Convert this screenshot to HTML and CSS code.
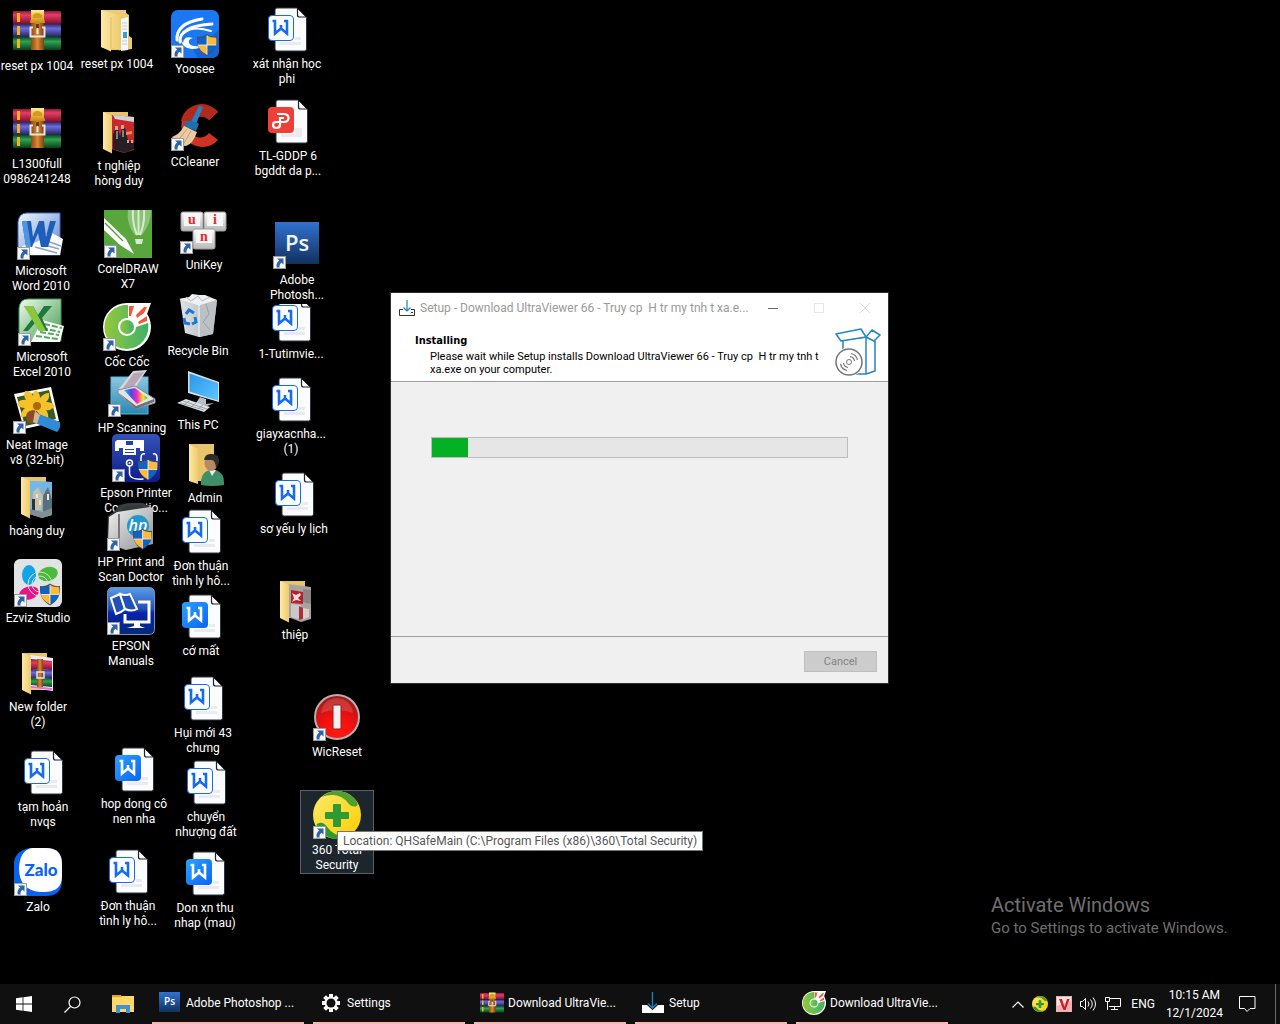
FILE: index.html
```html
<!DOCTYPE html>
<html lang="vi">
<head>
    <meta charset="UTF-8">
    <meta name="viewport" content="width=device-width, initial-scale=1.0">
    <title>Desktop</title>
    <link rel="stylesheet" href="styles.css">
</head>
<body>
    <!-- shared icon shapes -->
    <svg class="sprites" aria-hidden="true">
        <defs>
            <linearGradient id="gRed" x1="0" y1="0" x2="0" y2="1"><stop offset="0" stop-color="#8d1835"/><stop offset=".3" stop-color="#e63d67"/><stop offset="1" stop-color="#7a0f2b"/></linearGradient>
            <linearGradient id="gBlue" x1="0" y1="0" x2="0" y2="1"><stop offset="0" stop-color="#29295f"/><stop offset=".35" stop-color="#6b6be0"/><stop offset="1" stop-color="#232356"/></linearGradient>
            <linearGradient id="gGreen" x1="0" y1="0" x2="0" y2="1"><stop offset="0" stop-color="#0a4a20"/><stop offset=".35" stop-color="#2fa352"/><stop offset="1" stop-color="#07401b"/></linearGradient>
            <linearGradient id="gBelt" x1="0" y1="0" x2="1" y2="0"><stop offset="0" stop-color="#8a4a10"/><stop offset=".5" stop-color="#d98a35"/><stop offset="1" stop-color="#7e4010"/></linearGradient>
            <linearGradient id="gGold" x1="0" y1="0" x2="0" y2="1"><stop offset="0" stop-color="#fff08a"/><stop offset="1" stop-color="#c98a12"/></linearGradient>
            <linearGradient id="gFold" x1="0" y1="0" x2="1" y2="0"><stop offset="0" stop-color="#ffe9a6"/><stop offset="1" stop-color="#eccb6e"/></linearGradient>
            <linearGradient id="gWps" x1="0" y1="0" x2="1" y2="1"><stop offset="0" stop-color="#2aa2ff"/><stop offset="1" stop-color="#0b63f6"/></linearGradient>
            <linearGradient id="gPs" x1="0" y1="0" x2="0" y2="1"><stop offset="0" stop-color="#3172d0"/><stop offset="1" stop-color="#12315f"/></linearGradient>
            <linearGradient id="gWord" x1="0" y1="0" x2="1" y2="1"><stop offset="0" stop-color="#f2f7ff"/><stop offset="1" stop-color="#5b86cf"/></linearGradient>
            <linearGradient id="gExcel" x1="0" y1="0" x2="1" y2="1"><stop offset="0" stop-color="#f0faee"/><stop offset="1" stop-color="#3f9c50"/></linearGradient>
            <linearGradient id="gCoc" x1="0" y1="0" x2="1" y2="0"><stop offset="0" stop-color="#93c83d"/><stop offset="1" stop-color="#3fb16a"/></linearGradient>
            <linearGradient id="gScan" x1="0" y1="0" x2="0" y2="1"><stop offset="0" stop-color="#8fc6dd"/><stop offset="1" stop-color="#2688b5"/></linearGradient>
            <linearGradient id="gRain" x1="0" y1="0" x2="1" y2="0"><stop offset="0" stop-color="#20c8e8"/><stop offset=".3" stop-color="#4a4ae0"/><stop offset=".55" stop-color="#f030c0"/><stop offset=".8" stop-color="#f8e020"/><stop offset="1" stop-color="#40c040"/></linearGradient>
            <linearGradient id="gEpson" x1="0" y1="0" x2="0" y2="1"><stop offset="0" stop-color="#3552b8"/><stop offset="1" stop-color="#0c1c8c"/></linearGradient>
            <linearGradient id="gManual" x1="0" y1="0" x2="0" y2="1"><stop offset="0" stop-color="#5a9de8"/><stop offset=".45" stop-color="#2350b8"/><stop offset=".55" stop-color="#0722a8"/><stop offset="1" stop-color="#062a78"/></linearGradient>
            <linearGradient id="gPc" x1="0" y1="0" x2="1" y2="1"><stop offset="0" stop-color="#2a97e8"/><stop offset="1" stop-color="#5cc6ff"/></linearGradient>
            <linearGradient id="gCase" x1="0" y1="0" x2="1" y2="1"><stop offset="0" stop-color="#f2f2f2"/><stop offset="1" stop-color="#8f9294"/></linearGradient>
            <linearGradient id="gBin" x1="0" y1="0" x2="1" y2="0"><stop offset="0" stop-color="#dfe3e6"/><stop offset="1" stop-color="#a9afb4"/></linearGradient>
            <linearGradient id="gTs" x1="0" y1="0" x2="1" y2="1"><stop offset="0" stop-color="#ffe96b"/><stop offset="1" stop-color="#fbcf00"/></linearGradient>
            <linearGradient id="gKey" x1="0" y1="0" x2="0" y2="1"><stop offset="0" stop-color="#fafafa"/><stop offset="1" stop-color="#b8b8b8"/></linearGradient>
            <radialGradient id="gBtn" cx=".5" cy=".85" r=".8"><stop offset="0" stop-color="#ff1a10"/><stop offset=".5" stop-color="#f01010"/><stop offset="1" stop-color="#a81818"/></radialGradient>
        </defs>

        <symbol id="arrow" viewBox="0 0 13 13">
            <rect x=".5" y=".5" width="12" height="12" fill="#f6f6f6" stroke="#9c9c9c"/>
            <path d="M4 2.500h6.500v6L8.500 6.700C6.600 8 6.300 9.500 6.600 11.500H3.700C3 8.500 4 6.300 6.200 4.600z" fill="#2d63a9"/>
        </symbol>
        <symbol id="shield" viewBox="0 0 22 22">
            <path d="M11 0c3 2.200 6.500 3 10 2.600.6 9-2.600 15.600-10 19.400C3.600 18.200.4 11.600 1 2.600 4.500 3 8 2.200 11 0z" fill="#4a4f55"/>
            <path d="M11 1.500V11H1.900C1.500 9 1.500 6 1.800 3.700 5 3.800 8.500 3 11 1.500z" fill="#0e63c4"/>
            <path d="M11 1.500V11h9.100c.4-2 .4-5 .1-7.300-3.200.1-6.700-.7-9.200-2.200z" fill="#fdbb3c"/>
            <path d="M11 11v9.800c-5-2.600-8-5.800-9.100-9.800z" fill="#fdbb3c"/>
            <path d="M11 11v9.800c5-2.600 8-5.800 9.100-9.800z" fill="#0e63c4"/>
            <path d="M11 1.500v19.300M1.800 11h18.400" stroke="#f4f4f4" stroke-width=".8"/>
        </symbol>
        <symbol id="winrar" viewBox="0 0 48 48">
            <rect y="4" width="48" height="13" rx="1" fill="url(#gRed)"/>
            <rect y="17" width="48" height="13" rx="1" fill="url(#gBlue)"/>
            <rect y="30" width="48" height="13" rx="1" fill="url(#gGreen)"/>
            <path d="M4 6h3v9H4zM4 19h3v9H4zM4 32h3v9H4z" fill="#f7b21c"/>
            <rect x="18" y="4" width="13" height="39" fill="url(#gBelt)"/>
            <path d="M18 3h13v9q1 2 1 4H17q0-2 1-4z" fill="url(#gGold)"/>
            <path d="M20 8q4.500-4 9 0v3h-9z" fill="#d49a1c"/>
            <rect x="23" y="17" width="3" height="5" fill="#6e3a0c"/>
            <path d="M20 20.500h-2.500v9h14v-9H29" fill="none" stroke="#e4e4e4" stroke-width="2"/>
            <path d="M24.500 21v6" stroke="#eee" stroke-width="2"/>
        </symbol>
        <symbol id="folder-base" viewBox="0 0 48 48">
            <path d="M8 5h25v37H8z" fill="#e8c568"/>
        </symbol>
        <symbol id="folder-front" viewBox="0 0 48 48">
            <path d="M8 5l9 3.500V46.500L8 42z" fill="url(#gFold)"/>
        </symbol>
        <symbol id="folder-docs" viewBox="0 0 48 48">
            <path d="M8 5h25v3l3 2v21l3 2v11l-6 1H17L8 42z" fill="#ecca72"/>
            <path d="M28 14l7-2v33l-7 1z" fill="#f4f6f8"/>
            <path d="M29 18h5M29 21h5M29 24h5M29 36h5M29 39h5" stroke="#b4bcc2" stroke-width=".7"/>
            <path d="M30 27h4v6h-4z" fill="#3f9bd8"/>
            <path d="M8 5l19 5v35.500l-9-3v4L8 42z" fill="url(#gFold)"/>
            <path d="M18 12v31" stroke="#dcb95c" stroke-width=".8"/>
        </symbol>
        <symbol id="folder-red" viewBox="0 0 48 48">
            <use href="#folder-base"/>
            <path d="M16 8l23 2v33l-10 3-13-4z" fill="#c9282e"/>
            <path d="M18 8l21 2v5l-19-3z" fill="#cfd3d6"/>
            <path d="M18 28l2-6h3l2 7 2-8h3l3 12 6 3v6l-9 4-12-4z" fill="#262026"/>
            <path d="M20 19h3v4h-3zM26 18h3v4h-3zM32 33h2v3h-2zM36 33h2v3h-2z" fill="#d0a88c"/>
            <path d="M31 25l6-1v3l-6 1z" fill="#f08a3c"/>
            <path d="M22 24v8M28 23v7" stroke="#e6e0e0"/>
            <use href="#folder-front"/>
        </symbol>
        <symbol id="folder-photo" viewBox="0 0 48 48">
            <use href="#folder-base"/>
            <path d="M16 9l23 1v33l-10 3-13-4z" fill="#8faec2"/>
            <path d="M17 9l22 1v9l-9-3-6 7-7-3z" fill="#6fb7ec"/>
            <path d="M20 20l5-5 5 10-2 13h-9z" fill="#c6c0ad"/>
            <path d="M30 24l5-9 4 12v15l-9 3z" fill="#58707a"/>
            <path d="M19 27h3v14h-3z" fill="#2c3038"/>
            <path d="M17 37l12 3 10-4v7l-10 3-12-4z" fill="#7f8f93"/>
            <path d="M23 22h2v4h-2zM26 28h2v5h-2zM34 22h2v6h-2z" fill="#e8e4d6"/>
            <use href="#folder-front"/>
        </symbol>
        <symbol id="folder-card" viewBox="-1 0 48 48">
            <use href="#folder-base" width="48" height="48"/>
            <path d="M16 8l23 3v32l-10 3-13-5z" fill="#a8a39e"/>
            <path d="M19 14l12 2v12l-12-1z" fill="#b4202f"/>
            <path d="M20 17l4 2 4-2 1 2-3 3 3 3-5-1-4 2 2-4z" fill="#f1dcdc"/>
            <path d="M31 13l8 1v14l-8-2z" fill="#8b8782"/>
            <path d="M19 28l10 1 1 15-11-3z" fill="#c9c9cd"/>
            <path d="M31 32l6 1v8l-7 3z" fill="#d8d0c8"/>
            <path d="M27 30l4 2v11l-4 1z" fill="#a6323a"/>
            <use href="#folder-front" width="48" height="48"/>
        </symbol>
        <symbol id="folder-rar" viewBox="0 0 48 48">
            <use href="#folder-base"/>
            <path d="M16 7l23 3v33l-22-3z" fill="#f4eff4"/>
            <path d="M17 11l21 2v9l-21-1z" fill="url(#gRed)"/>
            <path d="M17 21l21 1v9l-21-1z" fill="url(#gBlue)"/>
            <path d="M17 30l21 1v8l-21-2z" fill="url(#gGreen)"/>
            <path d="M17 38l21 2v2l-21-2z" fill="#e46ade"/>
            <path d="M23 11h6v28h-6z" fill="url(#gBelt)"/>
            <rect x="23" y="24" width="7" height="6" fill="none" stroke="#e4e4e4" stroke-width="1.500"/>
            <use href="#folder-front"/>
        </symbol>
        <symbol id="folder-user" viewBox="0 0 48 48">
            <path d="M8 5h25v37H8z" fill="#e8c568"/>
            <path d="M8 5l9 5v35L8 42z" fill="url(#gFold)"/>
            <path d="M20 46q-1-12 8-15h7q8 3 8 12v3q-12 2-23 0z" fill="#3f8f68"/>
            <path d="M28 31l3 6 4-6z" fill="#e8efe9"/>
            <ellipse cx="30" cy="24" rx="6.500" ry="8" fill="#b98a62"/>
            <path d="M23 21q1-7 8-6 8 0 7 9l-3 5q-1-8-4-8z" fill="#2c2c2e"/>
        </symbol>
        <symbol id="paper" viewBox="0 0 48 48">
            <path d="M14 2h20l9.500 9.500V43q0 2-2 2H14q-2 0-2-2V4q0-2 2-2z" fill="#fbfcfd" stroke="#2c3440"/>
            <path d="M34.500 2.500V9q0 2 2 2h6.500" fill="none" stroke="#1c222a" stroke-width="1.200"/>
            <path d="M17 36h21v3H17zM32 31h6v3h-6z" fill="#e9ebee"/>
        </symbol>
        <symbol id="wps-w" viewBox="0 0 48 48">
            <path d="M9.500 15h2.500v12.500l6-5 6 5V15h-3M18 19v4.500" fill="none" stroke-width="2.600"/>
        </symbol>
        <symbol id="doc" viewBox="0 -1 48 48">
            <use href="#paper" width="48" height="48"/>
            <rect x="5.500" y="9.500" width="25" height="25" rx="3.500" fill="#fff" stroke="#146cf5"/>
            <use href="#wps-w" width="48" height="48" stroke="#146cf5"/>
        </symbol>
        <symbol id="doc-solid" viewBox="0 -1 48 48">
            <use href="#paper" width="48" height="48"/>
            <rect x="5" y="9" width="26" height="26" rx="4" fill="url(#gWps)"/>
            <use href="#wps-w" width="48" height="48" stroke="#fff"/>
        </symbol>
        <symbol id="doc-pdf" viewBox="0 -1 48 48">
            <use href="#paper" width="48" height="48"/>
            <path d="M31 30h7v8h-7z" fill="#e9ebee"/>
            <rect x="4" y="9" width="26" height="26" rx="4" fill="#ee4038"/>
            <path d="M13 16h6.500q5 0 5 4t-5 4H12q-3 0-3 3t3.500 3 3.500-3.500V20h4" fill="none" stroke="#fff" stroke-width="2.200"/>
        </symbol>
        <symbol id="word" viewBox="0 0 48 48">
            <path d="M1 10q1-9 9-9h33v42H1z" fill="url(#gWord)" stroke="#3f6fc0"/>
            <path d="M20 30l13-10 13 7-3 16H5v-9z" fill="#fdfdff"/>
            <path d="M27 28l17 6M24 32l18 5M18 35l22 6" stroke="#8aa4cf" stroke-width="1.500"/>
            <path d="M5 9h9l2 16 6-16h5l2 16 4-16h6l-8 26h-7l-3-14-6 14H9z" fill="#1d5fb8"/>
            <path d="M5 9h5l4 26H9z" fill="#4e97e0"/>
        </symbol>
        <symbol id="excel" viewBox="0 0 48 48">
            <path d="M1 10q1-9 9-9h33v42H1z" fill="url(#gExcel)" stroke="#3c9a50"/>
            <path d="M24 22l22 6-4 16H13z" fill="#fbfffa"/>
            <path d="M26 26l18 4M24 30l18 4M22 34l19 3M18 38l22 3" stroke="#5aa765" stroke-width="2" stroke-dasharray="6 2"/>
            <path d="M6 8h9l5 9 6-9h8L24 20l6 13h-9l-4-8-7 8H5l10-13z" fill="#1d7a3c"/>
            <path d="M6 8h9l13 25h-7z" fill="#8cc63e"/>
        </symbol>
        <symbol id="neat" viewBox="0 0 48 48">
            <path d="M1 8l37-7 8 34-35 8z" fill="#fff"/>
            <path d="M4 11l32-7 7 29-31 7z" fill="#395a1e"/>
            <path d="M23 4q4 3 4 8 4-5 9-5 1 6-3 9 6 0 9 4-4 5-9 4 3 4 2 9-6 0-9-5-1 6-5 8-4-3-4-8-4 4-9 3 0-6 4-9-6 0-8-4 3-5 9-4-3-4-1-9 6 0 8 5 0-5 3-6z" fill="#f6c22a"/>
            <circle cx="24" cy="20" r="4" fill="#b0680c"/>
            <path d="M13 33q-1-8 7-9 8 1 6 9-7 8-13 0z" fill="#8a4b26"/>
            <path d="M26 28l21 8q1 6-3 10L22 37z" fill="#2f8bd6"/>
            <path d="M22 25l5 4-3 9-4-2z" fill="#d0b896"/>
        </symbol>
        <symbol id="ezviz" viewBox="0 0 48 48">
            <rect width="48" height="48" rx="6" fill="#e2e3e4"/>
            <ellipse cx="15" cy="16" rx="7" ry="10" fill="#12a4e6"/>
            <ellipse cx="34" cy="15" rx="10" ry="7" transform="rotate(-15 34 15)" fill="#4cb93a"/>
            <ellipse cx="15" cy="34" rx="10" ry="6.500" transform="rotate(-15 15 34)" fill="#e8128a"/>
            <g fill="none" stroke="#cfe6d6"><circle cx="26" cy="25" r="4"/><circle cx="26" cy="25" r="8"/><circle cx="26" cy="25" r="12"/></g>
            <use href="#shield" x="25" y="24" width="22" height="23"/>
        </symbol>
        <symbol id="corel" viewBox="0 0 48 48">
            <rect width="48" height="48" fill="#58a63c"/>
            <path d="M24 0h23q0 14-9 25h-7Q22 14 24 0z" fill="#8cc477"/>
            <path d="M29 0q-1 13 4 25M34.500 0v25M40 0q1 13-4 25" stroke="#d5ead0" stroke-width="2" fill="none"/>
            <path d="M31 29h8l-1 5h-6z" fill="#d5ead0"/>
            <path d="M0 8l22 21 8 15-14-9L0 20z" fill="#fff"/>
            <path d="M1 13l18 18" stroke="#58a63c" stroke-width="1.500"/>
        </symbol>
        <symbol id="coccoc" viewBox="0 0 48 48">
            <circle cx="24" cy="24" r="24" fill="#fff"/><path d="M24 0h24l-5 14z" fill="#fff"/>
            <path d="M25 2a22 22 0 1 0 20 18l-12 4A9 9 0 1 1 25 15z" fill="url(#gCoc)"/>
            <circle cx="24" cy="24" r="7" fill="url(#gCoc)"/>
            <path d="M26 3h5l-3 10h-2zM33 12l8-8 3 0-3 6-7 5zM35 19l9-6 0 5-8 3z" fill="#f0583a"/>
        </symbol>
        <symbol id="scan" viewBox="0 0 48 48">
            <rect x="3" y="8" width="37" height="37" fill="url(#gScan)" stroke="#58b8dc"/>
            <path d="M25 2l14-1-12 18-17 2z" fill="#d9d5dc"/><path d="M26 4l10-1-11 15-10 1z" fill="#b8a6b4"/>
            <path d="M10 21l17-4 20 13v4L28 40 10 24z" fill="#e2e4e5" stroke="#858b90"/>
            <path d="M16 21l11-2 13 10-11 6z" fill="url(#gRain)"/>
            <path d="M11 24l17 13 18-7v3l-18 7z" fill="#6d7276"/>
        </symbol>
        <symbol id="epson-printer" viewBox="0 0 48 48">
            <rect width="48" height="48" rx="5" fill="url(#gEpson)"/>
            <path d="M5 6h27v8H3v-6zM3 14h4v3H3zM28 14h4v3h-4z" fill="#fff"/>
            <path d="M14 7h7v4h-7z" fill="#2442a4"/>
            <path d="M11 13h13v8H11z" fill="#fff"/><path d="M13 15.500h9M13 18.500h9" stroke="#2442a4"/>
            <g fill="none" stroke="#fff" stroke-width="1.500"><circle cx="17.500" cy="29" r="3"/><path d="M17.500 32v8q1 6 14 5M33 20q-4-1-4 4v3M41 20q4-1 4 4v3"/></g><circle cx="17.500" cy="29" r="1" fill="#fff"/>
            <use href="#shield" x="25" y="24" width="22" height="23"/>
        </symbol>
        <symbol id="hp-case" viewBox="0 0 48 48">
            <path d="M1 13L8 8l4-6 14-2 15 2 5 9-1 30-28 6L0 40z" fill="#34373a"/>
            <path d="M2 14l8-5 33-5q3 0 3 5v32l-27 6L1 40z" fill="url(#gCase)"/>
            <path d="M13 8q1-5 6-6l14-1q4 0 5 3" fill="none" stroke="#3b3e41" stroke-width="3"/>
            <path d="M12 11v34" stroke="#777" stroke-width="2"/>
            <circle cx="31" cy="23" r="11" fill="#2596cc"/>
        </symbol>
        <symbol id="manuals" viewBox="0 0 48 48">
            <rect x=".5" y=".5" width="47" height="47" rx="5" fill="url(#gManual)" stroke="#7893b8"/>
            <path d="M31 15h11v20H18v-8" fill="none" stroke="#fff" stroke-width="3"/>
            <path d="M27 35h6v4l5 2H20l7-2z" fill="#fff"/>
            <g fill="#2350b8" stroke="#fff" stroke-width="2"><path d="M4 11q5-2 9-4l5 15q-3 3-9 5z"/><path d="M13 7q6 2 10 0l7 15q-5 3-12 0z"/></g>
        </symbol>
        <symbol id="yoosee" viewBox="0 0 48 48">
            <rect width="48" height="48" rx="7" fill="#1b78f2"/>
            <path d="M22 40L48 20v20q0 8-8 8H27z" fill="#1765d4"/>
            <g fill="none" stroke="#fff" stroke-linecap="round"><path d="M6 30Q5 13 31 9" stroke-width="3"/><path d="M9 32q-1-16 32-18" stroke-width="3"/><path d="M13 23q9-8 27-2" stroke-width="2"/></g>
            <path d="M9 24q0 14 12 15 8 0 9-3-10 1-12-3-1-4 4-5-9-3-10 5-3-3-2-9z" fill="#fff"/>
            <use href="#shield" x="25" y="24" width="22" height="22"/>
        </symbol>
        <symbol id="ccleaner" viewBox="0 0 48 48">
            <path d="M47 9A21 21 0 1 0 47 37L38 30A11 11 0 1 1 38 17z" fill="#cf3324"/>
            <path d="M10 18A21 21 0 0 1 47 9l-9 8a11 11 0 0 0-17 2z" fill="#b22a1e"/>
            <path d="M28 3l4 1-7 17-5-2z" fill="#2382c8"/>
            <path d="M14 20q5-5 14 1l-3 7-12-5z" fill="#1d6fb0"/>
            <path d="M13 23l13 6q-4 12-11 14L2 42l3-3-4-5q8-3 12-11z" fill="#e8cba4"/>
            <path d="M16 26L6 39M20 28l-8 14" stroke="#c79e6a"/>
        </symbol>
        <symbol id="keys" viewBox="0 0 48 48">
            <g stroke="#9c9c9c"><rect x="1" y="6" width="22" height="19" rx="2" fill="url(#gKey)"/><rect x="24" y="6" width="22" height="19" rx="2" fill="url(#gKey)"/><rect x="13" y="23" width="22" height="20" rx="2" fill="url(#gKey)"/></g>
            <path d="M4 7h16v13H4zM27 7h16v13H27zM16 24h16v13H16z" fill="#f7f7f7"/>
        </symbol>
        <symbol id="bin" viewBox="0 0 48 48">
            <path d="M6 7l18-3 19 4-4 34-14 3-14-4z" fill="url(#gBin)"/>
            <path d="M5 7l10-2 3-3 7 1 6 0 12 5-17 6z" fill="#eef0f1"/>
            <path d="M12 5l5 4 7-5 4 5 8-4" fill="none" stroke="#b5babd"/>
            <path d="M25 13v32" stroke="#f2f4f5"/><path d="M26 13l17-5-4 34-13 3z" fill="#bbc1c5"/>
            <path d="M32 12l3 10-6 8 7 8" fill="none" stroke="#9aa1a6"/>
            <g fill="none" stroke="#1978d2" stroke-width="3"><path d="M12 22l3-4 5 3M10 26l1 5 5 1M21 25l1 5-4 2"/></g>
        </symbol>
        <symbol id="pc" viewBox="0 0 48 48">
            <path d="M14 5l31 11v20L14 27z" fill="#d8dde1"/><path d="M15.500 7.500L44 17v17.500l-28.500-9z" fill="url(#gPc)"/>
            <path d="M26 31l6 2v5l8-1-7 3-11-3z" fill="#b4bfc6"/>
            <path d="M3 37l9-4 24 8-6 5z" fill="#dce2e6"/>
            <path d="M6 37l24 7M9 35l24 8M10 39l5-4M17 41l5-4M24 43l5-4" stroke="#88929a" stroke-width=".8"/>
        </symbol>
        <symbol id="wic" viewBox="0 0 48 48">
            <circle cx="24" cy="24" r="22" fill="url(#gBtn)" stroke="#b5b0b0" stroke-width="2"/>
            <path d="M8 20q2-14 16-15 14 1 16 15-16-6-32 0z" fill="#fff" opacity=".15"/>
            <rect x="20" y="12" width="8" height="24" rx="1" fill="#f5f0f0" stroke="#a01414"/>
        </symbol>
        <symbol id="ts360" viewBox="0 0 48 48">
            <circle cx="24" cy="24" r="24" fill="url(#gTs)"/>
            <path d="M8 6Q24-6 40 6q6 6 4 9-5 2-9-3-9-12-27-6z" fill="#4fa02c"/>
            <path d="M40 42Q24 54 9 42 0 33 6 32q5-1 9 5 9 12 25 5z" fill="#2c9a2e"/>
            <path d="M21 13h6q1 0 1 1v7h7q1 0 1 1v5q0 1-1 1h-7v7q0 1-1 1h-6q-1 0-1-1v-7h-7q-1 0-1-1v-5q0-1 1-1h7v-7q0-1 1-1z" fill="#2f9a34"/>
        </symbol>
        <symbol id="lnk" viewBox="0 0 48 48">
            <use href="#arrow" x="0" y="35" width="13" height="13"/>
        </symbol>
    </svg>

    <main class="desktop">
        <button class="item i-reset-rar"><svg><use href="#winrar"/></svg><span>reset px 1004</span></button>
        <button class="item i-l1300"><svg><use href="#winrar"/></svg><span>L1300full<br>0986241248</span></button>
        <button class="item i-word"><svg><use href="#word"/><use href="#lnk"/></svg><span>Microsoft<br>Word 2010</span></button>
        <button class="item i-excel"><svg><use href="#excel"/><use href="#lnk"/></svg><span>Microsoft<br>Excel 2010</span></button>
        <button class="item i-neat"><svg><use href="#neat"/><use href="#lnk"/></svg><span>Neat Image<br>v8 (32-bit)</span></button>
        <button class="item i-hoang"><svg><use href="#folder-photo"/></svg><span>hoàng duy</span></button>
        <button class="item i-ezviz"><svg><use href="#ezviz"/><use href="#lnk"/></svg><span>Ezviz Studio</span></button>
        <button class="item i-newfolder"><svg><use href="#folder-rar"/></svg><span>New folder<br>(2)</span></button>
        <button class="item i-tamhoan"><svg><use href="#doc"/></svg><span>tạm hoản<br>nvqs</span></button>
        <button class="item i-zalo">
            <svg viewBox="0 0 48 48">
                <path d="M16 0h16q16 0 16 16v16q0 16-16 16H14Q0 48 0 32V14Q2 2 16 0z" fill="#0a62f0"/>
                <path d="M18 0h14q16 0 16 16v12q0 16-18 16H26Q5 42 5 20 6 2 18 0z" fill="#fff"/>
                <text class="zalo-text" x="27" y="28">Zalo</text>
                <use href="#lnk"/>
            </svg>
            <span>Zalo</span>
        </button>

        <button class="item i-reset-dir"><svg><use href="#folder-docs"/></svg><span>reset px 1004</span></button>
        <button class="item i-tnghiep"><svg><use href="#folder-red"/></svg><span>t nghiệp<br>hòng duy</span></button>
        <button class="item i-corel"><svg><use href="#corel"/><use href="#lnk"/></svg><span>CorelDRAW<br>X7</span></button>
        <button class="item i-coccoc"><svg><use href="#coccoc"/><use href="#lnk"/></svg><span>Cốc Cốc</span></button>
        <button class="item i-scan"><svg><use href="#scan"/><use href="#lnk"/></svg><span>HP Scanning</span></button>
        <button class="item i-epson"><svg><use href="#epson-printer"/><use href="#lnk"/></svg><span>Epson Printer<br>Connectio...</span></button>
        <button class="item i-hpdoctor">
            <svg viewBox="0 0 48 48">
                <use href="#hp-case"/>
                <text class="hp-text" x="31" y="28">hp</text>
                <use href="#shield" x="25" y="25" width="21" height="22"/>
                <use href="#lnk"/>
            </svg>
            <span>HP Print and<br>Scan Doctor</span>
        </button>
        <button class="item i-manuals"><svg><use href="#manuals"/><use href="#lnk"/></svg><span>EPSON<br>Manuals</span></button>
        <button class="item i-hopdong"><svg><use href="#doc-solid"/></svg><span>hop dong cô<br>nen nha</span></button>
        <button class="item i-don2"><svg><use href="#doc"/></svg><span>Đơn thuận<br>tình ly hô...</span></button>

        <button class="item i-yoosee"><svg><use href="#yoosee"/><use href="#lnk"/></svg><span>Yoosee</span></button>
        <button class="item i-ccleaner"><svg><use href="#ccleaner"/><use href="#lnk"/></svg><span>CCleaner</span></button>
        <button class="item i-unikey">
            <svg viewBox="0 0 48 48">
                <use href="#keys"/>
                <g class="key-text"><text x="12" y="18">u</text><text x="35" y="18">i</text><text x="24" y="35">n</text></g>
                <use href="#lnk"/>
            </svg>
            <span>UniKey</span>
        </button>
        <button class="item i-bin"><svg><use href="#bin"/></svg><span>Recycle Bin</span></button>
        <button class="item i-pc"><svg><use href="#pc"/></svg><span>This PC</span></button>
        <button class="item i-admin"><svg><use href="#folder-user"/></svg><span>Admin</span></button>
        <button class="item i-don1"><svg><use href="#doc"/></svg><span>Đơn thuận<br>tình ly hô...</span></button>
        <button class="item i-comat"><svg><use href="#doc-solid"/></svg><span>cớ mất</span></button>
        <button class="item i-hui"><svg><use href="#doc"/></svg><span>Hụi mới 43<br>chưng</span></button>
        <button class="item i-chuyen"><svg><use href="#doc"/></svg><span>chuyển<br>nhượng đất</span></button>
        <button class="item i-donxn"><svg><use href="#doc-solid"/></svg><span>Don xn thu<br>nhap (mau)</span></button>

        <button class="item i-xatnhan"><svg><use href="#doc"/></svg><span>xát nhận học<br>phi</span></button>
        <button class="item i-gddp"><svg><use href="#doc-pdf"/></svg><span>TL-GDDP 6<br>bgddt da p...</span></button>
        <button class="item i-ps">
            <svg viewBox="0 0 48 48">
                <rect x="2" y="1" width="44" height="42" fill="url(#gPs)"/>
                <text class="ps-text" x="24" y="30">Ps</text>
                <use href="#lnk"/>
            </svg>
            <span>Adobe<br>Photosh...</span>
        </button>
        <button class="item i-tutim"><svg><use href="#doc"/></svg><span>1-Tutimvie...</span></button>
        <button class="item i-giay"><svg><use href="#doc"/></svg><span>giayxacnha...<br>(1)</span></button>
        <button class="item i-soyeu"><svg><use href="#doc"/></svg><span>sơ yếu ly lịch</span></button>
        <button class="item i-thiep"><svg><use href="#folder-card"/></svg><span>thiệp</span></button>
        <button class="item i-wic"><svg><use href="#wic"/><use href="#lnk"/></svg><span>WicReset</span></button>
        <button class="item i-ts360 selected"><svg><use href="#ts360"/><use href="#lnk"/></svg><span>360 Total<br>Security</span></button>

        <div class="tooltip" role="tooltip">Location: QHSafeMain (C:\Program Files (x86)\360\Total Security)</div>

        <section class="window">
            <header class="titlebar">
                <svg class="title-icon" viewBox="0 0 16 16"><path d="M4 9.500H.5v6h15v-6H12M12 12.500h2" fill="none" stroke="#333"/><path d="M8 0v11M4.500 7.500L8 11 11.500 7.500" fill="none" stroke="#1a7fc1" stroke-width="1.200"/></svg>
                <h1>Setup - Download UltraViewer 66 - Truy cp&nbsp; H tr my tnh t xa.e...</h1>
                <button aria-label="Minimize"><svg viewBox="0 0 10 10"><path d="M0 5.500h10" stroke="#666"/></svg></button>
                <button aria-label="Maximize" disabled><svg viewBox="0 0 10 10"><path d="M.5.500h9v9h-9z" fill="none" stroke="#e6e6e6"/></svg></button>
                <button aria-label="Close" disabled><svg viewBox="0 0 10 10"><path d="M0 0l10 10M10 0L0 10" stroke="#dcdcdc"/></svg></button>
            </header>
            <div class="banner">
                <div class="banner-text">
                    <h2>Installing</h2>
                    <p>Please wait while Setup installs Download UltraViewer 66 - Truy cp&nbsp; H tr my tnh t<br>xa.exe on your computer.</p>
                </div>
                <svg class="box-art" viewBox="0 0 46 50">
                    <g fill="#fff" stroke="#2586c6" stroke-width="1.500" stroke-linejoin="round">
                        <path d="M8 12v34h23V9zM31 9l9 4v30l-9 3z"/>
                        <path d="M1 6l25-5 5 8-25 4zM31 9l6-7 8 5-6 6z"/>
                    </g>
                    <g fill="none" stroke="#777"><circle cx="14" cy="34" r="14.500" fill="#fff" stroke="none"/><circle cx="14" cy="34" r="13" fill="#fff" stroke-width="1.500"/><circle cx="14" cy="34" r="2.500"/>
                    <path d="M15 28.500a5.500 5.500 0 0 1 4.500 4.500M16 25.500a8.500 8.500 0 0 1 6.500 6.500M13 39.500a5.500 5.500 0 0 1-4.500-4.500M12 42.500A8.500 8.500 0 0 1 5.500 36" stroke-width="1.200"/></g>
                </svg>
            </div>
            <div class="window-body">
                <progress value="87" max="1000" aria-label="Installing"></progress>
            </div>
            <footer class="window-footer">
                <button class="cancel" disabled>Cancel</button>
            </footer>
        </section>

        <div class="watermark">
            <p class="watermark-title">Activate Windows</p>
            <p>Go to Settings to activate Windows.</p>
        </div>
    </main>

    <nav class="taskbar">
        <button class="tb-btn" aria-label="Start"><svg width="16" height="16" viewBox="0 0 16 16"><path d="M0 2.200L6.600 1.300V7.600H0zM7.400 1.200L16 0V7.600H7.400zM0 8.400H6.600V14.700L0 13.800zM7.400 8.400H16V16L7.400 14.800z" fill="#fff"/></svg></button>
        <button class="tb-btn" aria-label="Search"><svg width="17" height="17" viewBox="0 0 17 17"><circle cx="10.500" cy="6.500" r="5.500" fill="none" stroke="#fff" stroke-width="1.200"/><path d="M6.600 10.400L.5 16.500" stroke="#fff" stroke-width="1.200"/></svg></button>
        <button class="tb-btn explorer" aria-label="File Explorer"><svg width="22" height="18" viewBox="0 0 22 18"><path d="M0 0h9l1 2H0z" fill="#e8a317"/><path d="M0 2h9l1-1h12v16H0z" fill="#ffd767"/><path d="M4 10h14v8h-4v-4H8v4H4z" fill="#3a93dc"/></svg></button>
        <div class="tasks">
            <button class="task"><svg viewBox="0 0 24 24"><rect x="1" y="1" width="21" height="20" fill="url(#gPs)"/><text class="ps-small" x="11.500" y="14">Ps</text></svg><span>Adobe Photoshop ...</span></button>
            <button class="task"><svg viewBox="0 0 24 24"><g stroke="#fff"><path d="M12 3v18M3 12h18M5.600 5.600l12.800 12.800M18.400 5.600L5.600 18.400" stroke-width="4"/></g><circle cx="12" cy="12" r="6.500" fill="#fff"/><circle cx="12" cy="12" r="4.500" fill="#101010"/></svg><span>Settings</span></button>
            <button class="task"><svg viewBox="0 0 48 48"><use href="#winrar"/></svg><span>Download UltraVie...</span></button>
            <button class="task"><svg viewBox="0 0 24 24"><path d="M1 14h22v8H1z" fill="#fff"/><path d="M6 14h11l-5.500 5z" fill="#101010"/><path d="M11.500 1v16M7 12.500l4.500 4.500 4.500-4.500" fill="none" stroke="#1a7fc1" stroke-width="1.400"/></svg><span>Setup</span></button>
            <button class="task"><svg viewBox="0 0 48 48"><use href="#coccoc"/></svg><span>Download UltraVie...</span></button>
        </div>
        <div class="tray">
            <svg width="12" height="7" viewBox="0 0 12 7"><path d="M.5 6.500L6 1l5.500 5.500" fill="none" stroke="#fff" stroke-width="1.200"/></svg>
            <svg width="16" height="16" viewBox="0 0 48 48"><use href="#ts360"/></svg>
            <svg width="16" height="16" viewBox="0 0 16 16"><rect width="16" height="16" fill="#f3b0b0"/><path d="M1 1h14v4L1 10z" fill="#fbe4e4"/><path d="M3 3h3l2.500 8L11 3h2.500L9.500 14h-2z" fill="#c81e26"/></svg>
            <svg width="17" height="16" viewBox="0 0 17 16"><path d="M.5 5.500h2l3-3v11l-3-3h-2zM8 5.500q2 2.500 0 5M10.500 3.500q3.500 4.500 0 9M13 1.500q5 6.500 0 13" fill="none" stroke="#fff"/></svg>
            <svg width="16" height="14" viewBox="0 0 16 14"><path d="M5 1.500h10.500v8H4M2.500 5v8M.5.500h4v4h-4zM9.500 9.500v3M6 12.500h7" fill="none" stroke="#fff"/></svg>
            <span class="lang">ENG</span>
            <time class="clock">10:15 AM<br>12/1/2024</time>
            <svg class="notify" width="17" height="16" viewBox="0 0 17 16"><path d="M.5.500h15.500v12h-5L8 15.500 5.500 12.500h-5z" fill="none" stroke="#fff"/></svg>
        </div>
    </nav>
</body>
</html>
```
FILE: styles.css
```css
* {
    box-sizing: border-box;
}
body {
    margin: 0;
    height: 100vh;
    display: flex;
    flex-direction: column;
    overflow: hidden;
    background-color: #000;
    color: #fff;
    font-family: Roboto, "Noto Sans", sans-serif;
    font-size: 12px;
}
h1, h2, p {
    margin: 0;
}
button {
    font: inherit;
    color: inherit;
    background: none;
    border: none;
    padding: 0;
}
.sprites {
    position: absolute;
    width: 0;
    height: 0;
}
.desktop {
    position: relative;
    flex: 1;
}

.item {
    position: absolute;
    width: 72px;
    display: flex;
    flex-direction: column;
    align-items: center;
    gap: 4px;
    line-height: 15px;
    white-space: nowrap;
}
.item > svg {
    width: 48px;
    height: 48px;
}
.item.selected {
    background-color: #1c262c;
    outline: 1px solid #56636b;
}
.i-reset-rar { left: 1px; top: 7px; }
.i-l1300 { left: 1px; top: 105px; }
.i-word { left: 5px; top: 212px; }
.i-excel { left: 6px; top: 298px; }
.i-neat { left: 1px; top: 386px; }
.i-hoang { left: 1px; top: 472px; }
.i-ezviz { left: 2px; top: 559px; }
.i-newfolder { left: 2px; top: 648px; }
.i-tamhoan { left: 7px; top: 748px; }
.i-zalo { left: 2px; top: 848px; }
.i-reset-dir { left: 81px; top: 5px; }
.i-tnghiep { left: 83px; top: 107px; }
.i-corel { left: 92px; top: 210px; }
.i-coccoc { left: 91px; top: 303px; }
.i-scan { left: 96px; top: 369px; }
.i-epson { left: 100px; top: 434px; }
.i-hpdoctor { left: 95px; top: 503px; }
.i-manuals { left: 95px; top: 587px; }
.i-hopdong { left: 98px; top: 745px; }
.i-don2 { left: 92px; top: 847px; }
.i-yoosee { left: 159px; top: 10px; }
.i-ccleaner { left: 159px; top: 103px; }
.i-unikey { left: 168px; top: 206px; }
.i-bin { left: 162px; top: 292px; }
.i-pc { left: 162px; top: 366px; }
.i-admin { left: 169px; top: 439px; }
.i-don1 { left: 165px; top: 507px; }
.i-comat { left: 165px; top: 592px; }
.i-hui { left: 167px; top: 674px; }
.i-chuyen { left: 170px; top: 758px; }
.i-donxn { left: 169px; top: 849px; }
.i-xatnhan { left: 251px; top: 5px; }
.i-gddp { left: 252px; top: 97px; }
.i-ps { left: 261px; top: 221px; z-index: 1; }
.i-ps span {
    padding-bottom: 1px;
    background-color: #000;
}
.i-tutim { left: 255px; top: 295px; }
.i-giay { left: 255px; top: 375px; }
.i-soyeu { left: 258px; top: 470px; }
.i-thiep { left: 259px; top: 576px; }
.i-wic { left: 301px; top: 693px; }
.i-ts360 { left: 301px; top: 791px; }

/* lettering inside icons */
.zalo-text {
    font: 900 17px Lato, sans-serif;
    fill: #0a62f0;
    text-anchor: middle;
}
.hp-text {
    font: italic 600 16px "Open Sans", sans-serif;
    fill: #fff;
    text-anchor: middle;
}
.key-text {
    font: bold 14px "Liberation Serif", serif;
    fill: #f0262c;
    text-anchor: middle;
}
.ps-text {
    font: 600 22px "Open Sans", sans-serif;
    fill: #f0f4fb;
    text-anchor: middle;
}
.ps-small {
    font: 600 10px "Open Sans", sans-serif;
    fill: #fff;
    text-anchor: middle;
}

.tooltip {
    position: absolute;
    left: 337px;
    top: 831px;
    padding: 0 5px;
    border: 1px solid #767676;
    background-color: #fff;
    color: #575757;
    line-height: 18px;
    white-space: nowrap;
}

/* installer window */
.window {
    position: absolute;
    left: 390px;
    top: 292px;
    width: 499px;
    height: 392px;
    display: flex;
    flex-direction: column;
    border: 1px solid #2b2f33;
    background-color: #f0f0f0;
    color: #000;
}
.titlebar {
    display: flex;
    align-items: center;
    height: 30px;
    padding-left: 8px;
    background-color: #fff;
}
.title-icon {
    flex: none;
    width: 16px;
    height: 16px;
    margin-right: 5px;
}
.titlebar h1 {
    flex: 1;
    font-size: 12px;
    font-weight: normal;
    color: #999;
    white-space: nowrap;
}
.titlebar button {
    flex: none;
    width: 46px;
    height: 30px;
    display: flex;
    align-items: center;
    justify-content: center;
}
.titlebar button svg {
    width: 10px;
    height: 10px;
}
.banner {
    display: flex;
    justify-content: space-between;
    height: 59px;
    padding: 5px 7px 0 24px;
    border-bottom: 1px solid #a0a0a0;
    background-color: #fff;
    font-size: 11px;
    line-height: 13px;
}
.banner h2 {
    margin: 6px 0 3px;
    font-family: "DejaVu Sans Condensed", "DejaVu Sans", sans-serif;
    font-size: 11px;
}
.banner p {
    padding-left: 15px;
    white-space: nowrap;
}
.box-art {
    flex: none;
    width: 46px;
    height: 50px;
}
.window-body {
    flex: 1;
    padding: 55px 40px 0;
}
progress {
    display: block;
    width: 100%;
    height: 21px;
    appearance: none;
    border: 1px solid #bcbcbc;
}
progress::-webkit-progress-bar {
    background-color: #e6e6e6;
}
progress::-webkit-progress-value {
    background-color: #06b025;
}
.window-footer {
    display: flex;
    justify-content: flex-end;
    height: 47px;
    padding: 14px 11px 0 0;
    border-top: 1px solid #a0a0a0;
}
.cancel {
    width: 73px;
    height: 21px;
    border: 1px solid #bfbfbf;
    background-color: #ccc;
    color: #838383;
    font-size: 11px;
}

.watermark {
    position: absolute;
    left: 991px;
    bottom: 46px;
    color: #6f6f6f;
    font-size: 15px;
    line-height: 20px;
    white-space: nowrap;
}
.watermark-title {
    font-size: 20px;
    line-height: 26px;
}

.taskbar {
    display: flex;
    height: 40px;
    background-color: #101010;
}
.tb-btn {
    width: 48px;
    display: flex;
    align-items: center;
    justify-content: center;
}
.explorer {
    width: 56px;
    padding-right: 2px;
}
.tasks {
    flex: 1;
    display: flex;
    gap: 9px;
}
.task {
    width: 152px;
    display: flex;
    align-items: center;
    gap: 4px;
    padding-left: 6px;
    border-bottom: 2px solid #ffb3ab;
    white-space: nowrap;
}
.task svg {
    width: 24px;
    height: 24px;
}
.tray {
    display: flex;
    align-items: center;
    gap: 8px;
    margin-right: 4px;
    padding-right: 19px;
    border-right: 1px solid #6b6b6b;
}
.lang {
    margin: 0 3px 0 2px;
}
.clock {
    text-align: center;
    line-height: 18px;
}
.notify {
    margin-left: 8px;
}
```
